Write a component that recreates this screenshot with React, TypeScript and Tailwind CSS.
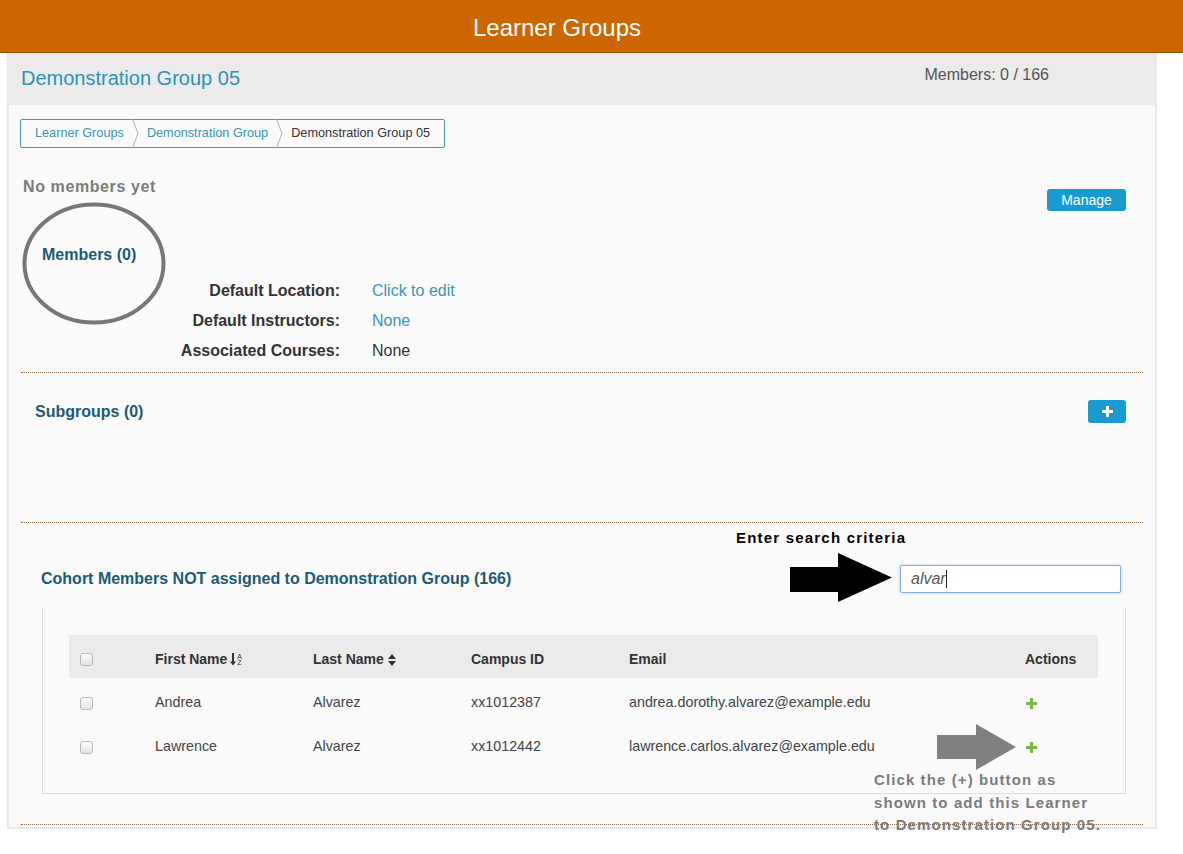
import React from "react"

const rows = [
  { first: "Andrea", last: "Alvarez", id: "xx1012387", email: "andrea.dorothy.alvarez@example.edu" },
  { first: "Lawrence", last: "Alvarez", id: "xx1012442", email: "lawrence.carlos.alvarez@example.edu" },
]

function Chevron() {
  return (
    <svg width="7" height="29" viewBox="0 0 7 29" className="shrink-0">
      <polyline points="0.5,0 6,14.5 0.5,29" fill="none" stroke="#9fb6bf" strokeWidth="1" />
    </svg>
  )
}

function Checkbox() {
  return <div className="w-[13px] h-[13px] rounded-[3px] border border-[#b9b9b9] bg-gradient-to-b from-[#fdfdfd] to-[#e3e3e3]" />
}

function SortAlpha() {
  return (
    <span className="inline-flex items-center ml-[3px] text-[#333]">
      <svg width="6" height="13" viewBox="0 0 6 13">
        <path d="M3 0v10" stroke="#333" strokeWidth="2" />
        <path d="M0 8.5h6L3 12.5z" fill="#333" />
      </svg>
      <span className="flex flex-col leading-[6px] text-[7px] ml-[1px] font-normal">
        <span>A</span>
        <span>Z</span>
      </span>
    </span>
  )
}

function SortBoth() {
  return (
    <svg width="8" height="12" viewBox="0 0 8 12" className="ml-[4px]">
      <path d="M0 5h8L4 0z" fill="#333" />
      <path d="M0 7h8L4 12z" fill="#333" />
    </svg>
  )
}

function Arrow({ color, w, h, bodyTop, bodyH, bodyW }: { color: string; w: number; h: number; bodyTop: number; bodyH: number; bodyW: number }) {
  return (
    <svg width={w} height={h} viewBox={`0 0 ${w} ${h}`}>
      <path
        d={`M0 ${bodyTop} H${bodyW} V0 L${w} ${h / 2} L${bodyW} ${h} V${bodyTop + bodyH} H0 Z`}
        fill={color}
      />
    </svg>
  )
}

export default function App() {
  return (
    <div className="min-h-screen bg-white font-['Liberation_Sans',Arial,sans-serif] text-[#333]">
      <div className="h-[53px] bg-[#cc6600] border-b border-[#9a4d00] flex items-center justify-center pt-[4px]">
        <h1 className="text-white text-[24px] pr-[69px]">Learner Groups</h1>
      </div>

      <div className="ml-[7px] w-[1150px] border-x-2 border-b-2 border-[#e9e9e9]">
        <div className="h-[52px] bg-[#ebebeb] flex items-start justify-between -mx-[2px]">
          <h2 className="text-[20px] text-[#2f92b6] ml-[14px] mt-[10px]">Demonstration Group 05</h2>
          <div className="text-[16px] text-[#555] mt-[10px] mr-[108px]">Members: 0 / 166</div>
        </div>

        <div className="relative bg-[#fafafa] pb-[2px]">
          {/* breadcrumb */}
          <div className="pt-[14px] pl-[11px]">
            <div className="inline-flex items-center h-[29px] border border-[#4a98ad] rounded-[2px] pl-[14px] pr-[14px] gap-[8px] text-[12.7px]">
              <span className="text-[#3b95b3]">Learner Groups</span>
              <Chevron />
              <span className="text-[#3b95b3]">Demonstration Group</span>
              <Chevron />
              <span className="text-[#333]">Demonstration Group 05</span>
            </div>
          </div>

          <div className="flex items-start justify-between mt-[29px]">
            <div className="ml-[14px] text-[16px] leading-[20px] font-bold text-[#7b7b7b] tracking-[0.6px]">No members yet</div>
            <button className="mt-[12px] mr-[29px] h-[22px] w-[79px] rounded-[3px] bg-[#1a9bcf] text-white text-[14px]">Manage</button>
          </div>

          <div className="ml-[33px] mt-[34px] text-[16px] leading-[20px] font-bold text-[#1d5b70]">Members (0)</div>

          <div className="mt-[11px]">
            {[
              ["Default Location:", "Click to edit", true],
              ["Default Instructors:", "None", true],
              ["Associated Courses:", "None", false],
            ].map(([label, value, link]) => (
              <div key={label as string} className="flex items-center h-[30px] text-[16px]">
                <div className="w-[331px] text-right font-bold text-[#333]">{label}</div>
                <div className={`ml-[32px] ${link ? "text-[#3b95b3]" : "text-[#333]"}`}>{value}</div>
              </div>
            ))}
          </div>

          <div className="mx-[12px] mt-[6px] border-t border-dotted border-[#8a6a48]" />

          <div className="flex items-center justify-between h-[23px] mt-[27px]">
            <div className="ml-[26px] text-[16px] font-bold text-[#1d5b70]">Subgroups (0)</div>
            <button className="mr-[29px] h-[23px] w-[38px] rounded-[3px] bg-[#1a9bcf] flex items-center justify-center">
              <svg width="11" height="11" viewBox="0 0 11 11">
                <path d="M5.5 0v11M0 5.5h11" stroke="white" strokeWidth="3" />
              </svg>
            </button>
          </div>

          <div className="mx-[12px] mt-[99px] border-t border-dotted border-[#8a6a48]" />

          <div className="ml-[727px] mt-[6px] text-[15px] leading-[18px] font-bold text-black tracking-[1.2px]">Enter search criteria</div>

          <div className="flex items-center justify-between mt-[18px]">
            <div className="ml-[32px] text-[16px] font-bold text-[#1d5b70]">Cohort Members NOT assigned to Demonstration Group (166)</div>
            <div className="mr-[34px] w-[221px] h-[28px] border border-[#86acd9] rounded-[2px] bg-white flex items-center pl-[10px] shadow-[0_0_3px_rgba(102,153,221,0.5)]">
              <span className="italic text-[16px] text-[#555]">alvar</span>
              <span className="w-px h-[18px] bg-[#222]" />
            </div>
          </div>

          {/* table */}
          <div className="ml-[33px] w-[1084px] mt-[15px] border-x border-b border-[#dedede] pt-[27px] pl-[26px] pr-[27px] pb-[24px]">
            <div className="grid grid-cols-[86px_158px_158px_158px_396px_1fr] items-center h-[43px] pt-[6px] bg-[#ecebeb] text-[14px] font-bold text-[#333]">
              <div className="pl-[11px]"><Checkbox /></div>
              <div className="flex items-center">First Name<SortAlpha /></div>
              <div className="flex items-center">Last Name<SortBoth /></div>
              <div>Campus ID</div>
              <div>Email</div>
              <div>Actions</div>
            </div>
            <div className="pt-[3px]">
              {rows.map((r) => (
                <div key={r.id} className="grid grid-cols-[86px_158px_158px_158px_396px_1fr] items-center h-[44px] text-[14.3px] text-[#444]">
                  <div className="pl-[11px]"><Checkbox /></div>
                  <div>{r.first}</div>
                  <div>{r.last}</div>
                  <div>{r.id}</div>
                  <div>{r.email}</div>
                  <div className="pl-[1px]">
                    <svg width="11" height="11" viewBox="0 0 11 11">
                      <path d="M5.5 0v11M0 5.5h11" stroke="#7ab648" strokeWidth="3" />
                    </svg>
                  </div>
                </div>
              ))}
            </div>
          </div>

          <div className="mx-[12px] mt-[30px] border-t border-dotted border-[#8a6a48]" />

          {/* annotations */}
          <svg className="absolute left-[13px] top-[97px]" width="144" height="123" viewBox="0 0 144 123">
            <ellipse cx="72" cy="61.5" rx="69.5" ry="59" fill="none" stroke="#777" strokeWidth="4" />
          </svg>
          <div className="absolute left-[781px] top-[448px]">
            <Arrow color="#000" w={102} h={49} bodyTop={14} bodyH={25} bodyW={48} />
          </div>
          <div className="absolute left-[928px] top-[619px]">
            <Arrow color="#808080" w={79} h={46} bodyTop={11} bodyH={24} bodyW={39} />
          </div>
          <div className="absolute left-[865px] top-[664px] text-[15px] leading-[22.5px] font-bold text-[#7b7b7b] tracking-[1.1px] whitespace-nowrap">
            <div>Click the (+) button as</div>
            <div>shown to add this Learner</div>
            <div>to Demonstration Group 05.</div>
          </div>
        </div>
      </div>
    </div>
  )
}
